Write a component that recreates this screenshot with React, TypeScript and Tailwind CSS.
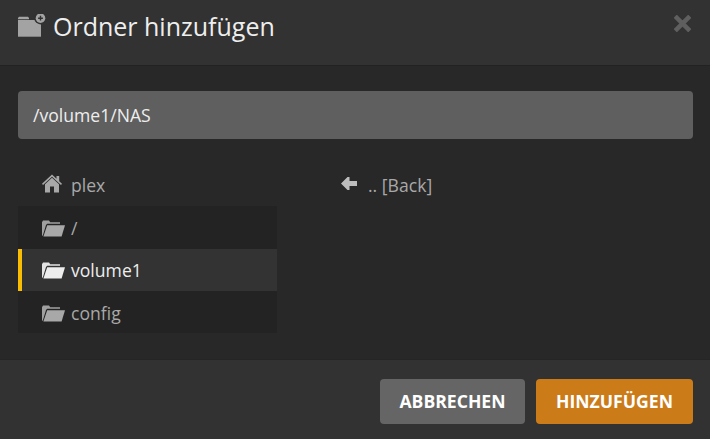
import React from "react";

function FolderOpen() {
  return (
    <svg width="23" height="17" viewBox="0 0 23 17" fill="currentColor" className="mt-[1px]">
      <path d="M0 16V2.2L1 .6h6l1.2 1.6H18v1.6H5.2L4 5 0.9 15.2z" opacity="0.95" />
      <path d="M5.2 5.2H23l-3.4 11.3H1.4z" />
    </svg>
  );
}

function Row({ label, active, pad, icon }: { label: string; active?: boolean; pad?: string; icon?: React.ReactNode }) {
  return (
    <div
      className={`flex items-center h-[42.33px] pl-6 relative text-[17.6px] ${pad ?? ""} ${
        active ? "bg-[#333333] text-[#eeeeee]" : "text-[#a8a8a8]"
      }`}
    >
      {active && <div className="absolute left-0 top-0 bottom-0 w-1 bg-[#f9be03]" />}
      <div className="w-[29px] shrink-0 flex items-center">{icon}</div>
      <span>{label}</span>
    </div>
  );
}

export default function App() {
  return (
    <div
      className="w-[710px] h-[439px] flex flex-col overflow-hidden bg-[#282828]"
      style={{ fontFamily: '"Open Sans", sans-serif' }}
    >
      <div className="h-[66px] shrink-0 flex items-center justify-between bg-[#323232] border-b border-[#222222] px-[18px] pb-[21px] pt-[8px]">
        <div className="flex items-center gap-[7px]">
          <svg width="28" height="24" viewBox="0 0 28 24" fill="#a3a3a3">
            <path d="M0 5.300V4L1 2.700H10L11 4V5.300z" />
            <path d="M0 6H23V22.700H0z" />
            <circle cx="22.500" cy="4.200" r="6.200" fill="#323232" />
            <circle cx="22.500" cy="4.200" r="4.800" />
            <path d="M21.800 1.800h1.400v1.700h1.700v1.400h-1.700v1.700h-1.400V4.900h-1.700V3.500h1.700z" fill="#323232" />
          </svg>
          <span className="text-[25px] leading-none text-[#eeeeee]">Ordner hinzufügen</span>
        </div>
        <svg width="17" height="17" viewBox="0 0 17 17" className="mr-[1px] mt-[-6px]" stroke="#5f5f5f" strokeWidth="4.500" strokeLinecap="square">
          <path d="M2.800 2.800 14.200 14.200M14.200 2.800 2.800 14.200" />
        </svg>
      </div>

      <div className="flex-1 pl-[18px] pr-[17px] pt-[25px]">
        <div className="h-12 rounded bg-[#5f5f5f] flex items-center px-[15px] text-[17.6px] text-[#eeeeee]">
          /volume1/NAS
        </div>
        <div className="flex mt-[25px] gap-10">
          <div className="w-[259px]">
            <Row
              label="plex"
              icon={
                <svg width="20" height="19" viewBox="0 0 20 19" fill="currentColor" className="mt-[-4px]">
                  <path d="M10 .5 14.500 4.700V2h2.700v5.200L20 9.800l-1 1.200-9-8.300L1 11 0 9.800z" />
                  <path d="M10 3.700 17 10.200V18.500H12V12.500H8V18.500H3V10.200z" />
                </svg>
              }
            />
            <div className="bg-[#232323]">
              <Row label="/" pad="pt-[1px]" icon={<FolderOpen />} />
              <Row label="volume1" active icon={<FolderOpen />} />
              <Row label="config" pad="pt-[2px]" icon={<FolderOpen />} />
            </div>
          </div>
          <div className="flex-1">
            <div className="flex items-center h-[42.33px] pl-6 text-[17.6px] text-[#a8a8a8]">
              <div className="w-[27px] shrink-0 flex items-center">
                <svg width="16" height="13" viewBox="0 0 16 13" fill="#bdbdbd" className="mt-[-3px]">
                  <path d="M0 6.500 6.500 0h2v4H16v5H8.500v4h-2z" />
                </svg>
              </div>
              <span>.. [Back]</span>
            </div>
          </div>
        </div>
      </div>

      <div className="h-20 shrink-0 bg-[#323232] border-t border-[#252525] flex items-start justify-end gap-[11px] pr-[17px] pt-[19px]">
        <button className="h-[45px] w-[145px] rounded bg-[#656565] text-white font-bold text-[17.6px]">ABBRECHEN</button>
        <button className="h-[45px] w-[157px] rounded bg-[#cc7b19] text-white font-bold text-[17.6px]">HINZUFÜGEN</button>
      </div>
    </div>
  );
}
